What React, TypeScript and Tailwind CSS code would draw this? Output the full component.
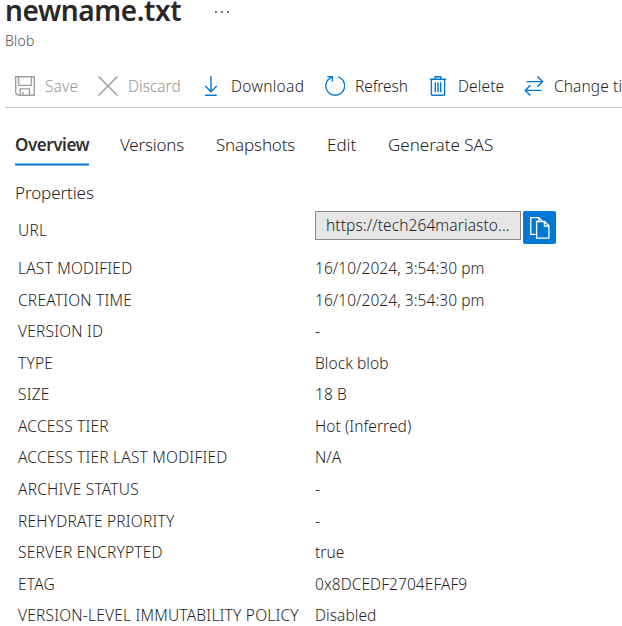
import type { ReactNode } from "react";

const stroke = "fill-none stroke-current";

function SaveIcon() {
  return (
    <svg viewBox="0 0 20 20" className={`size-5 ${stroke}`} strokeWidth="1.4">
      <path d="M.7 .7H19.3V19.3H3.1L.7 16.9Z" />
      <path d="M3.6 .7V9.4H16.4V.7" />
      <path d="M5.2 19.3V12.9H14.4V19.3" />
      <path d="M8.1 19.3V15.8" />
    </svg>
  );
}

function DiscardIcon() {
  return (
    <svg viewBox="0 0 20 20" className={`size-5 ${stroke}`} strokeWidth="1.5">
      <path d="M.5 .5 19.5 19.5M19.5 .5 .5 19.5" />
    </svg>
  );
}

function DownloadIcon() {
  return (
    <svg viewBox="0 0 20 20" className={`size-5 ${stroke}`} strokeWidth="1.4">
      <path d="M10 .2V15.6M4.3 10 10 15.7 15.7 10M4.2 19.3H15.8" />
    </svg>
  );
}

function RefreshIcon() {
  return (
    <svg viewBox="0 0 20 20" className={`size-5 ${stroke}`} strokeWidth="1.35">
      <path d="M13 .9A9.4 9.4 0 1 1 6.9 1.1" />
      <path d="M2.4 .6H7.3V5.5" />
    </svg>
  );
}

function DeleteIcon() {
  return (
    <svg viewBox="0 0 20 20" className={`size-5 ${stroke}`} strokeWidth="1.4">
      <path d="M2 3.2H18M7.2 3.1V.8H12.8V3.1" />
      <path d="M3.4 3.2V18.2Q3.4 19.3 4.5 19.3H15.5Q16.6 19.3 16.6 18.2V3.2" />
      <path d="M7.3 6.2V16.2M10 6.2V16.2M12.7 6.2V16.2" />
    </svg>
  );
}

function SwapIcon() {
  return (
    <svg viewBox="0 0 20 20" className={`size-5 ${stroke}`} strokeWidth="1.4">
      <path d="M2.4 5.6H18.6M13.4 .4 18.6 5.6 13.4 10.8" />
      <path d="M17.6 14.4H1.2M6.4 9.2 1.2 14.4 6.4 19.6" />
    </svg>
  );
}

function CopyIcon() {
  return (
    <svg viewBox="0 0 20 22" className="h-[22px] w-5 fill-none stroke-white" strokeWidth="1.3">
      <path d="M5.6 17.4H.8V.7H8.8L12.6 4.4" />
      <path d="M8.8 .7V4.4" />
      <path d="M6.6 4.5H14.6L18.9 8.8V21.1H6.6Z" />
      <path d="M14.4 4.6V9H18.8" />
    </svg>
  );
}

const commands: { label: string; icon: ReactNode; size: string; muted?: boolean }[] = [
  { label: "Save", icon: <SaveIcon />, size: "w-[83px] tracking-[0.15px]", muted: true },
  { label: "Discard", icon: <DiscardIcon />, size: "w-[103px]", muted: true },
  { label: "Download", icon: <DownloadIcon />, size: "w-[124px] tracking-[0.3px]" },
  { label: "Refresh", icon: <RefreshIcon />, size: "w-[103px] tracking-[-0.1px]" },
  { label: "Delete", icon: <DeleteIcon />, size: "w-[96px] tracking-[0.1px]" },
  { label: "Change ti", icon: <SwapIcon />, size: "w-[98px] tracking-[0.1px]" },
];

const tabs = [
  { label: "Versions", size: "w-[96px] tracking-[-0.22px]" },
  { label: "Snapshots", size: "w-[111px] tracking-[-0.16px]" },
  { label: "Edit", size: "w-[61px]" },
  { label: "Generate SAS", size: "w-[120px]" },
];

const properties = [
  { name: "LAST MODIFIED", value: "16/10/2024, 3:54:30 pm" },
  { name: "CREATION TIME", value: "16/10/2024, 3:54:30 pm" },
  { name: "VERSION ID", value: "-" },
  { name: "TYPE", value: "Block blob" },
  { name: "SIZE", value: "18 B" },
  { name: "ACCESS TIER", value: "Hot (Inferred)" },
  { name: "ACCESS TIER LAST MODIFIED", value: "N/A" },
  { name: "ARCHIVE STATUS", value: "-" },
  { name: "REHYDRATE PRIORITY", value: "-" },
  { name: "SERVER ENCRYPTED", value: "true" },
  { name: "ETAG", value: "0x8DCEDF2704EFAF9" },
  { name: "VERSION-LEVEL IMMUTABILITY POLICY", value: "Disabled" },
];

export default function App() {
  return (
    <div className="h-[626px] w-[622px] overflow-hidden bg-white font-['Noto_Sans','Open_Sans',sans-serif] text-[15.5px] font-[350] text-[#1f1e1d]">
      <header className="h-[65px] pl-[5px]">
        <div className="flex h-5 items-center">
          <h1 className="w-[209px] whitespace-nowrap text-[28px] leading-5 font-semibold tracking-[-0.4px] text-[#292827]">newname.txt</h1>
          <svg viewBox="0 0 16 4" className="mt-1 h-1 w-4 fill-[#323130]">
            <circle cx="2" cy="2" r=".9" />
            <circle cx="8" cy="2" r=".9" />
            <circle cx="14" cy="2" r=".9" />
          </svg>
        </div>
        <p className="pt-[10px] text-sm leading-[21px] tracking-[0.2px] text-[#504e4c]">Blob</p>
      </header>

      <div className="ml-[5px] flex h-[43px] items-center overflow-hidden border-b border-[#c8c6c4] pl-[10px]">
        {commands.map((c) => (
          <button
            key={c.label}
            className={`flex shrink-0 items-center gap-[10px] whitespace-nowrap ${c.size} ${c.muted ? "text-[#969492]" : ""}`}
          >
            <span className={c.muted ? "text-[#a19f9d]" : "text-[#0078d4]"}>{c.icon}</span>
            <span className="pt-[2px]">{c.label}</span>
          </button>
        ))}
      </div>

      <nav className="flex h-[58px] pt-[26px] pl-[15px] text-[17px] leading-[21px]">
        <div className="w-[105px]">
          <div className="flex h-8 w-[74px] flex-col justify-between">
            <span className="font-semibold tracking-[-0.45px] text-[#323130]">Overview</span>
            <div className="h-[3px] shrink-0 border-y border-[#80bcea] bg-[#0078d4]" />
          </div>
        </div>
        {tabs.map((t) => (
          <span key={t.label} className={`whitespace-nowrap ${t.size}`}>{t.label}</span>
        ))}
      </nav>

      <section>
        <h2 className="h-[45px] pt-4 pl-[15px] text-[17px] leading-[21px] tracking-[-0.1px]">Properties</h2>
        <div className="flex h-[42px] items-start pl-[18px]">
          <span className="w-[297px] pt-[9px] leading-[21px] tracking-[0.2px]">URL</span>
          <div className="mr-[2px] h-[29px] w-[206px] border border-[#8a8886] bg-[#e6e6e6] pl-[10px] leading-[27px] tracking-[0.1px] whitespace-nowrap">
            https://tech264mariasto...
          </div>
          <button className="flex size-[33px] items-center justify-center rounded-[2px] bg-[#0078d4]">
            <CopyIcon />
          </button>
        </div>
        <dl>
          {properties.map((p) => (
            <div key={p.name} className="flex h-[31.55px] items-center whitespace-nowrap">
              <dt className="w-[315px] pl-[18px] tracking-[0.21px]">{p.name}</dt>
              <dd className="tracking-[0.06px]">{p.value}</dd>
            </div>
          ))}
        </dl>
      </section>
    </div>
  );
}
